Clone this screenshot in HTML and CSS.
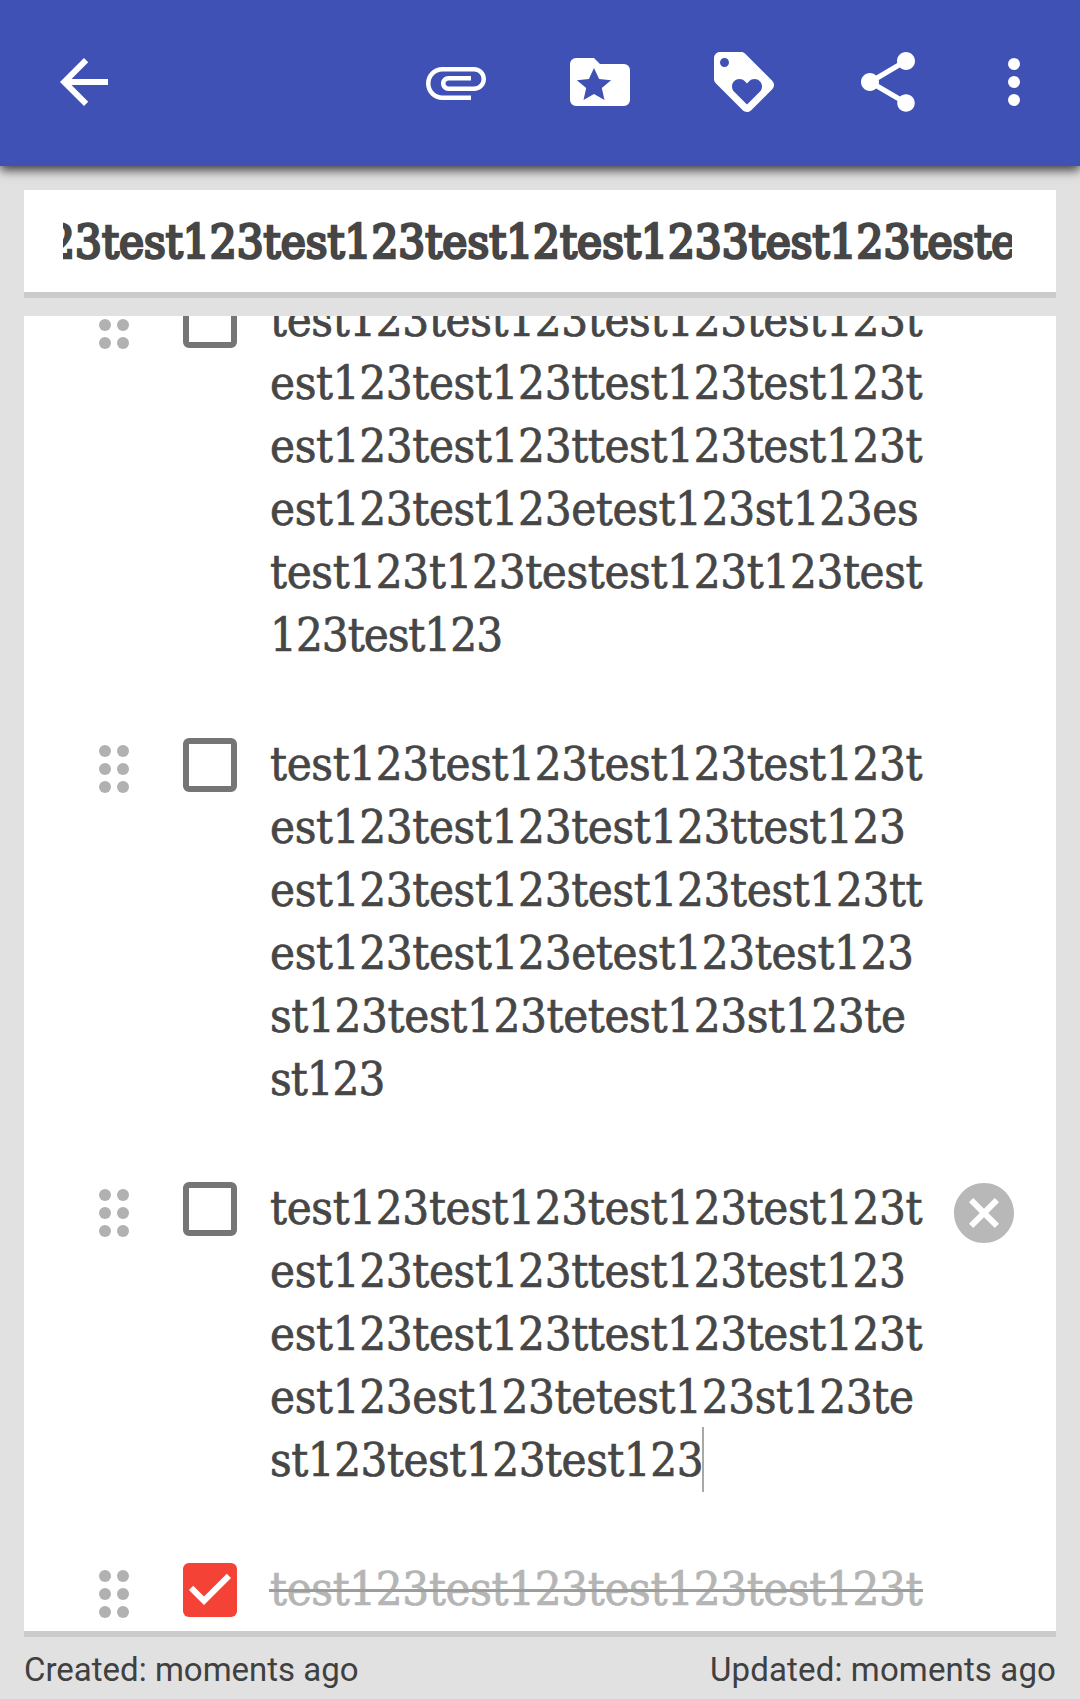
FILE: index.html
```html
<!DOCTYPE html>
<html lang="en">
<head>
<meta charset="utf-8">
<title>Checklist note</title>
<link rel="stylesheet" href="styles.css">
</head>
<body>
<header class="toolbar">
  <svg class="icon back" viewBox="0 0 24 24"><path d="M20 11H7.83l5.59-5.59L12 4l-8 8 8 8 1.41-1.41L7.83 13H20v-2z"/></svg>
  <nav class="actions">
    <svg class="icon" viewBox="0 0 24 24"><path d="M7.5 18C4.46 18 2 15.54 2 12.5S4.46 7 7.5 7H18c2.21 0 4 1.79 4 4s-1.79 4-4 4H9.5C8.12 15 7 13.88 7 12.5S8.12 10 9.5 10H17v1.5H9.5c-.55 0-1 .45-1 1s.45 1 1 1H18c1.38 0 2.5-1.12 2.5-2.5S19.38 8.5 18 8.5H7.5c-2.21 0-4 1.79-4 4s1.79 4 4 4H17V18H7.5z"/></svg>
    <svg class="icon" viewBox="0 0 24 24"><path fill-rule="evenodd" d="M20 6h-8l-2-2H4a2 2 0 0 0-2 2v12a2 2 0 0 0 2 2h16a2 2 0 0 0 2-2V8a2 2 0 0 0-2-2zM13.5 18L10 16l-3.5 2 .9-4-3.1-2.6 4-.4L10 7.3l1.7 3.7 4 .4-3.1 2.6.9 4z"/></svg>
    <svg class="icon" viewBox="0 0 24 24"><path d="M21.41 11.58l-9-9C12.05 2.22 11.55 2 11 2H4c-1.1 0-2 .9-2 2v7c0 .55.22 1.05.59 1.42l9 9c.36.36.86.58 1.41.58.55 0 1.05-.22 1.41-.59l7-7c.37-.36.59-.86.59-1.41 0-.55-.23-1.06-.59-1.42zM5.5 7C4.67 7 4 6.33 4 5.5S4.67 4 5.5 4 7 4.67 7 5.5 6.33 7 5.5 7zm11.77 8.27L13 19.54l-4.27-4.27C8.28 14.81 8 14.19 8 13.5c0-1.38 1.12-2.5 2.5-2.5.69 0 1.32.28 1.77.74l.73.72.73-.73c.45-.45 1.08-.73 1.77-.73 1.38 0 2.5 1.12 2.5 2.5 0 .69-.28 1.32-.73 1.77z"/></svg>
    <svg class="icon" viewBox="0 0 24 24"><path d="M18 16.08c-.76 0-1.44.3-1.96.77L8.91 12.7c.05-.23.09-.46.09-.7s-.04-.47-.09-.7l7.05-4.11c.54.5 1.25.81 2.04.81 1.66 0 3-1.34 3-3s-1.34-3-3-3-3 1.34-3 3c0 .24.04.47.09.7L8.04 9.81C7.5 9.31 6.79 9 6 9c-1.66 0-3 1.34-3 3s1.34 3 3 3c.79 0 1.5-.31 2.04-.81l7.12 4.16c-.05.21-.08.43-.08.65 0 1.61 1.31 2.92 2.92 2.92s2.92-1.31 2.92-2.92-1.31-2.92-2.92-2.92z"/></svg>
    <svg class="icon more" viewBox="0 0 24 24"><circle cx="12" cy="6" r="2"/><circle cx="12" cy="12" r="2"/><circle cx="12" cy="18" r="2"/></svg>
  </nav>
</header>
<section class="title-card"><div class="title"><span>23test123test123test12test1233test123teste</span></div></section>
<main class="list">
  <article class="item">
    <svg class="handle" viewBox="0 0 30 48"><circle cx="6" cy="6" r="6"/><circle cx="24" cy="6" r="6"/><circle cx="6" cy="24" r="6"/><circle cx="24" cy="24" r="6"/><circle cx="6" cy="42" r="6"/><circle cx="24" cy="42" r="6"/></svg>
    <span class="checkbox"></span>
    <p class="text">test123test123test123test123t<br>est123test123ttest123test123t<br>est123test123ttest123test123t<br>est123test123etest123st123es<br>test123t123testest123t123test<br><span class="tight">123test123</span></p>
  </article>
  <article class="item">
    <svg class="handle" viewBox="0 0 30 48"><circle cx="6" cy="6" r="6"/><circle cx="24" cy="6" r="6"/><circle cx="6" cy="24" r="6"/><circle cx="24" cy="24" r="6"/><circle cx="6" cy="42" r="6"/><circle cx="24" cy="42" r="6"/></svg>
    <span class="checkbox"></span>
    <p class="text">test123test123test123test123t<br>est123test123test123ttest123<br>est123test123test123test123tt<br>est123test123etest123test123<br>st123test123tetest123st123te<br><span class="tight">st123</span></p>
  </article>
  <article class="item">
    <svg class="handle" viewBox="0 0 30 48"><circle cx="6" cy="6" r="6"/><circle cx="24" cy="6" r="6"/><circle cx="6" cy="24" r="6"/><circle cx="24" cy="24" r="6"/><circle cx="6" cy="42" r="6"/><circle cx="24" cy="42" r="6"/></svg>
    <span class="checkbox"></span>
    <p class="text">test123test123test123test123t<br>est123test123ttest123test123<br>est123test123ttest123test123t<br>est123est123tetest123st123te<br><span class="caret-line">st123test123test123</span></p>
    <svg class="remove" viewBox="0 0 24 24"><path d="M12 2C6.47 2 2 6.47 2 12s4.47 10 10 10 10-4.47 10-10S17.53 2 12 2zm5 13.59L15.59 17 12 13.41 8.41 17 7 15.59 10.59 12 7 8.41 8.41 7 12 10.59 15.59 7 17 8.41 13.41 12 17 15.59z"/></svg>
  </article>
  <article class="item done">
    <svg class="handle" viewBox="0 0 30 48"><circle cx="6" cy="6" r="6"/><circle cx="24" cy="6" r="6"/><circle cx="6" cy="24" r="6"/><circle cx="24" cy="24" r="6"/><circle cx="6" cy="42" r="6"/><circle cx="24" cy="42" r="6"/></svg>
    <svg class="checked" viewBox="3 3 18 18"><rect x="3" y="3" width="18" height="18" rx="2"/><path d="M10 17l-5-5 1.41-1.41L10 14.17l7.59-7.59L19 8l-9 9z"/></svg>
    <p class="text"><span class="struck">test123test123test123test123t</span></p>
  </article>
</main>
<footer class="status"><span class="created">Created: moments ago</span><span class="updated">Updated: moments ago</span></footer>
</body>
</html>
```

FILE: styles.css
```css
* { box-sizing: border-box; }
html, body { height: 1699px; overflow: hidden; }
body {
  margin: 0;
  display: flex;
  flex-direction: column;
  background: #e1e1e1;
  color: #464646;
  font-family: "Roboto Slab", "DejaVu Serif Condensed", "DejaVu Serif", serif;
  font-stretch: condensed;
}
.toolbar {
  flex: none;
  height: 166px;
  padding: 46px 30px 48px 48px;
  display: flex;
  justify-content: space-between;
  background: #3f51b5;
  box-shadow: 0 4px 10px 0 rgba(0, 0, 0, .75);
}
.icon { width: 72px; height: 72px; fill: #fff; flex: none; }
.actions { display: flex; gap: 72px; }
.more { margin-left: -18px; }
.title-card {
  flex: none;
  height: 108px;
  margin: 24px 24px 0;
  padding: 20px 44px 0 39px;
  background: #fff;
  border-bottom: 6px solid #cbcbcb;
}
.title {
  display: flex;
  overflow: hidden;
  white-space: nowrap;
  font-size: 47px;
  line-height: 63px;
  letter-spacing: .05px;
  -webkit-text-stroke: 2.6px #464646;
}
.title span { margin-left: -15px; }
.list {
  flex: none;
  height: 1321px;
  margin: 18px 24px 0;
  background: #fff;
  border-bottom: 6px solid #cbcbcb;
  overflow: hidden;
}
.item {
  display: flex;
  align-items: flex-start;
  padding-left: 75px;
  margin-bottom: 66px;
}
.item:first-child { margin-top: -27px; }
.handle { width: 30px; height: 48px; margin-top: 12px; fill: #b1b1b1; flex: none; }
.checkbox, .checked { flex: none; width: 54px; height: 54px; margin: 5px 0 0 54px; }
.checkbox { border: 6px solid #757575; border-radius: 6px; }
.checked rect { fill: #f44336; }
.checked path { fill: #fff; }
.text {
  margin: -1px 0 1px 33px;
  width: 678px;
  flex: none;
  font-size: 47px;
  line-height: 63px;
  white-space: nowrap;
  letter-spacing: -.35px;
  -webkit-text-stroke: .7px currentColor;
}
.tight { letter-spacing: -1px; }
.caret-line { position: relative; letter-spacing: -.47px; }
.caret-line::after {
  content: "";
  position: absolute;
  right: -1px;
  top: -5px;
  width: 2px;
  height: 65px;
  background: #a8a8a8;
}
.remove { width: 72px; height: 72px; fill: #b8b8b8; flex: none; }
.done .text { color: #b5b5b5; }
.struck { position: relative; }
.struck::after {
  content: "";
  position: absolute;
  left: -1px;
  right: -1px;
  bottom: 24px;
  height: 3px;
  background: #9c9e9c;
}
.status {
  flex: 1;
  padding: 13px 24px 0;
  display: flex;
  justify-content: space-between;
  font: 33px/39px Roboto, sans-serif;
  color: #404040;
}
.updated { letter-spacing: .13px; }
```
